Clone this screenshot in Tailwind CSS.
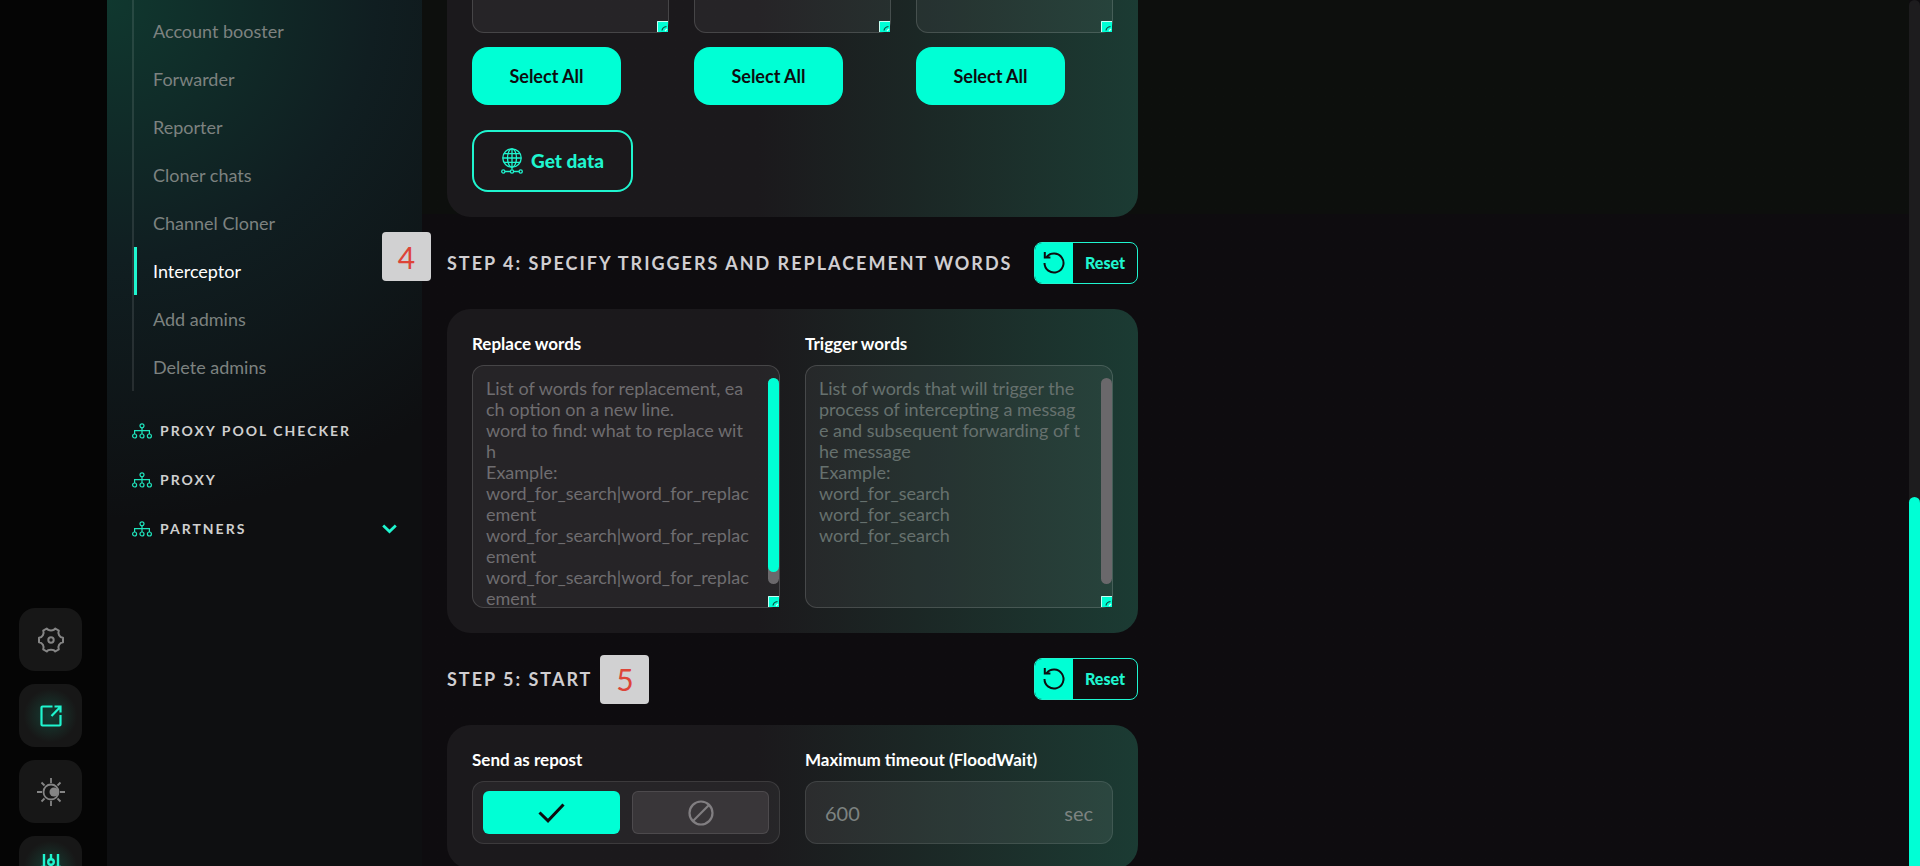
<!DOCTYPE html>
<html lang="en">
<head>
  <meta charset="UTF-8" />
  <meta name="viewport" content="width=device-width, initial-scale=1.0"/>
  <title>Interceptor</title>
  <script src="https://cdn.jsdelivr.net/npm/@tailwindcss/browser@4"></script>
</head>
<body class="bg-[#0e0c0f] text-white font-['Lato','Liberation_Sans',sans-serif]">
  <!-- shared icons -->
  <svg class="hidden">
    <symbol id="tree" viewBox="0 0 20 16">
      <g fill="none" stroke="currentColor" stroke-width="1.2">
        <circle cx="10" cy="2.8" r="2"/>
        <circle cx="2.6" cy="13" r="2"/>
        <circle cx="10" cy="13" r="2"/>
        <circle cx="17.4" cy="13" r="2"/>
        <path d="M10 4.800V11M2.600 11V7.600H17.400V11"/>
      </g>
    </symbol>
    <symbol id="reset" viewBox="0 0 24 24">
      <path fill="none" stroke="currentColor" stroke-width="2" d="M2.500 12A9.500 9.500 0 1 0 4.600 6.100M2.800 1V6.600H8.400"/>
    </symbol>
    <symbol id="grip" viewBox="0 0 11 11">
      <rect width="11" height="11" fill="#00ffd5"/>
      <path d="M.5 11V.5H11" fill="none" stroke="#c9fff4"/>
      <path d="M5 9.500Q5.500 6 9.500 5.500" fill="none" stroke="#11493f" stroke-width="1.200"/>
      <path d="M8 10L10 8" stroke="#c9fff4" stroke-width="1.200"/>
    </symbol>
  </svg>

  <div class="flex h-screen overflow-hidden">
    <!-- icon rail -->
    <aside class="flex w-[107px] shrink-0 flex-col gap-[13px] bg-[#050505] pl-[19px] pt-[608px]">
      <button aria-label="Settings" class="flex size-[63px] shrink-0 items-center justify-center rounded-2xl bg-[#171717] text-[#858585]">
        <svg class="size-[26px]" viewBox="0 0 26 26" fill="none" stroke="currentColor" stroke-width="2" stroke-linejoin="round">
          <path d="M8.800 1.500C10 4 16 4 17.200 1.500L20.800 3.600C19.500 6.500 21.500 10.500 25 10.800V15.200C21.500 15.500 19.500 19.500 20.800 22.400L17.200 24.500C16 22 10 22 8.800 24.500L5.200 22.400C6.500 19.500 4.500 15.500 1 15.200V10.800C4.500 10.500 6.500 6.500 5.200 3.600Z"/>
          <circle cx="13" cy="13" r="2.700"/>
        </svg>
      </button>
      <button aria-label="Open in new window" class="flex size-[63px] shrink-0 items-center justify-center rounded-2xl bg-[#171717] bg-radial from-[#0b3f35] to-[#171717] to-60% text-[#1ff5cf]">
        <svg class="size-[22px]" viewBox="0 0 22 22" fill="none" stroke="currentColor" stroke-width="2.200">
          <path d="M12.500 1.500H2.500Q1.500 1.500 1.500 2.500V19.500Q1.500 20.500 2.500 20.500H19.500Q20.500 20.500 20.500 19.500V10M11.500 11L19.500 2.800M14.500 1.500H20.500V7.500"/>
        </svg>
      </button>
      <button aria-label="Theme" class="flex size-[63px] shrink-0 items-center justify-center rounded-2xl bg-[#171717] text-[#858585]">
        <svg class="size-[28px]" viewBox="0 0 28 28" fill="none" stroke="currentColor" stroke-width="1.800">
          <circle cx="14" cy="14" r="7.500"/>
          <circle cx="17" cy="14" r="4.500" fill="currentColor" stroke="none"/>
          <path d="M14 0V5M14 23V28M0 14H5M23 14H28M4.500 4.500L7.500 7.500M20.500 20.500L23.500 23.500M4.500 23.500L7.500 20.500M20.500 7.500L23.500 4.500"/>
        </svg>
      </button>
      <button aria-label="Controls" class="flex size-[63px] shrink-0 items-center justify-center rounded-2xl bg-[#171717] bg-radial from-[#0b3f35] to-[#171717] to-60% text-[#1ff5cf]">
        <svg class="size-[30px]" viewBox="0 0 30 30" fill="none" stroke="currentColor" stroke-width="2.400">
          <path d="M8 1V14M22 1V14M15 1V6M15 12V29M8 20V29M22 20V29M5 14H11M19 14H25"/>
          <circle cx="15" cy="9" r="2.800"/>
        </svg>
      </button>
    </aside>

    <!-- sidebar -->
    <nav class="w-[315px] shrink-0 bg-[#0e0e10] bg-radial-[ellipse_170%_60%_at_0%_0%] from-[#10382f] via-[#101e21] via-50% to-[#0e0f11] pl-[25px] text-lg text-[#7d8280]">
      <div class="border-l-2 border-white/10 pt-[7px]">
        <a href="#" class="flex h-12 items-center pl-[19px]">Account booster</a>
        <a href="#" class="flex h-12 items-center pl-[19px]">Forwarder</a>
        <a href="#" class="flex h-12 items-center pl-[19px]">Reporter</a>
        <a href="#" class="flex h-12 items-center pl-[19px]">Cloner chats</a>
        <a href="#" class="flex h-12 items-center pl-[19px]">Channel Cloner</a>
        <a href="#" class="flex h-12 items-center border-l-3 border-[#1ff5cf] pl-4 text-white">Interceptor</a>
        <a href="#" class="flex h-12 items-center pl-[19px]">Add admins</a>
        <a href="#" class="flex h-12 items-center pl-[19px]">Delete admins</a>
      </div>
      <div class="pt-[15px] text-sm font-bold tracking-[2px] text-[#cfcfcf]">
        <a href="#" class="flex h-[49px] items-center gap-2"><svg class="h-4 w-5 text-[#1fe5bd]"><use href="#tree"/></svg>PROXY POOL CHECKER</a>
        <a href="#" class="flex h-[49px] items-center gap-2"><svg class="h-4 w-5 text-[#1fe5bd]"><use href="#tree"/></svg>PROXY</a>
        <a href="#" class="flex h-[49px] items-center gap-2 pr-[25px]"><svg class="h-4 w-5 text-[#1fe5bd]"><use href="#tree"/></svg>PARTNERS
          <svg class="ml-auto h-[10px] w-[15px]" viewBox="0 0 15 10" fill="none" stroke="#1ff5cf" stroke-width="2.800"><path d="M1.200 1.500L7.500 7.500L13.800 1.500"/></svg>
        </a>
      </div>
    </nav>

    <!-- content -->
    <main class="min-w-0 grow bg-linear-to-b from-[#0d0f0d] from-[214px] to-[#0e0c0f] to-[214px] pl-[25px]">
      <div class="flex w-[691px] flex-col gap-[25px]">
        <section class="rounded-b-3xl bg-linear-to-r from-[#1b191c] from-45% via-[#1b2725] via-68% to-[#1b3b33] px-[25px] pb-[25px]">
          <div class="grid grid-cols-3 gap-[25px]">
            <div>
              <div class="relative">
                <textarea aria-label="Accounts" class="block h-[33px] w-full resize-none rounded-b-xl border border-t-0 border-white/15 bg-white/5"></textarea>
                <svg class="absolute right-px bottom-px size-[11px]"><use href="#grip"/></svg>
              </div>
              <button class="mt-[14px] h-[58px] w-[149px] rounded-2xl bg-[#00ffd5] text-lg font-bold text-[#0e0c0f]">Select All</button>
            </div>
            <div>
              <div class="relative">
                <textarea aria-label="Sources" class="block h-[33px] w-full resize-none rounded-b-xl border border-t-0 border-white/15 bg-white/5"></textarea>
                <svg class="absolute right-px bottom-px size-[11px]"><use href="#grip"/></svg>
              </div>
              <button class="mt-[14px] h-[58px] w-[149px] rounded-2xl bg-[#00ffd5] text-lg font-bold text-[#0e0c0f]">Select All</button>
            </div>
            <div>
              <div class="relative">
                <textarea aria-label="Targets" class="block h-[33px] w-full resize-none rounded-b-xl border border-t-0 border-white/15 bg-white/5"></textarea>
                <svg class="absolute right-px bottom-px size-[11px]"><use href="#grip"/></svg>
              </div>
              <button class="mt-[14px] h-[58px] w-[149px] rounded-2xl bg-[#00ffd5] text-lg font-bold text-[#0e0c0f]">Select All</button>
            </div>
          </div>
          <button class="mt-[25px] flex h-[62px] w-[161px] items-center justify-center gap-2 rounded-2xl border-2 border-[#1ff5cf] text-[19px] font-black text-[#1ff5cf]">
            <svg class="h-[26px] w-[22px]" viewBox="0 0 22 26" fill="none" stroke="currentColor" stroke-width="1.300">
              <circle cx="11" cy="10" r="9.200"/>
              <ellipse cx="11" cy="10" rx="4.500" ry="9.200"/>
              <path d="M11 .8V21.500M1.800 10H20.200M3 5.700H19M3 14.300H19M4 23.500H9M13 23.500H18"/>
              <circle cx="2.300" cy="23.500" r="1.600"/>
              <circle cx="11" cy="23.500" r="1.600"/>
              <circle cx="19.700" cy="23.500" r="1.600"/>
            </svg>
            Get data
          </button>
        </section>

        <div class="relative flex h-[42px] items-center justify-between">
          <span class="absolute -left-[65px] -top-[10px] flex size-[49px] items-center justify-center rounded-sm bg-[#d1d1d2] text-3xl text-[#dd4438]">4</span>
          <h2 class="whitespace-nowrap text-lg font-bold tracking-[2px] text-[#d0ced1]">STEP 4: SPECIFY TRIGGERS AND REPLACEMENT WORDS</h2>
          <button class="flex h-full w-[104px] shrink-0 overflow-hidden rounded-lg border border-[#1ff5cf] text-base font-black text-[#1ff5cf]">
            <span class="flex h-full w-[38px] items-center justify-center bg-[#00ffd5] text-[#0e0c0f]"><svg class="size-6"><use href="#reset"/></svg></span>
            <span class="flex h-full grow items-center justify-center">Reset</span>
          </button>
        </div>

        <section class="grid grid-cols-2 gap-[25px] rounded-3xl bg-linear-to-r from-[#1b191c] from-45% via-[#1b2725] via-68% to-[#1b3b33] p-[25px]">
          <div>
            <label for="replace" class="mb-[11px] block text-[17px] leading-5 font-bold">Replace words</label>
            <div class="relative">
              <textarea id="replace" class="block h-[243px] w-full resize-none overflow-hidden rounded-xl border border-white/15 bg-white/5 px-[13px] py-3 text-lg leading-[21px] whitespace-pre placeholder:text-[#6f6d70]" placeholder="List of words for replacement, ea&#10;ch option on a new line.&#10;word to find: what to replace wit&#10;h&#10;Example:&#10;word_for_search|word_for_replac&#10;ement&#10;word_for_search|word_for_replac&#10;ement&#10;word_for_search|word_for_replac&#10;ement"></textarea>
              <div class="absolute top-[13px] right-px h-[206px] w-[11px] rounded-full bg-[#6a686b]">
                <div class="h-[194px] rounded-full bg-[#00ffd5]"></div>
              </div>
              <svg class="absolute right-px bottom-px size-[11px]"><use href="#grip"/></svg>
            </div>
          </div>
          <div>
            <label for="trigger" class="mb-[11px] block text-[17px] leading-5 font-bold">Trigger words</label>
            <div class="relative">
              <textarea id="trigger" class="block h-[243px] w-full resize-none overflow-hidden rounded-xl border border-white/15 bg-white/5 px-[13px] py-3 text-lg leading-[21px] whitespace-pre placeholder:text-[#66716e]" placeholder="List of words that will trigger the&#10;process of intercepting a messag&#10;e and subsequent forwarding of t&#10;he message&#10;Example:&#10;word_for_search&#10;word_for_search&#10;word_for_search"></textarea>
              <div class="absolute top-[13px] right-px h-[206px] w-[11px] rounded-full bg-[#6a686b]"></div>
              <svg class="absolute right-px bottom-px size-[11px]"><use href="#grip"/></svg>
            </div>
          </div>
        </section>

        <div class="flex h-[42px] items-center gap-2">
          <h2 class="whitespace-nowrap text-lg font-bold tracking-[2px] text-[#d0ced1]">STEP 5: START</h2>
          <span class="flex size-[49px] items-center justify-center rounded-sm bg-[#d1d1d2] text-3xl text-[#dd4438]">5</span>
          <button class="ml-auto flex h-full w-[104px] shrink-0 overflow-hidden rounded-lg border border-[#1ff5cf] text-base font-black text-[#1ff5cf]">
            <span class="flex h-full w-[38px] items-center justify-center bg-[#00ffd5] text-[#0e0c0f]"><svg class="size-6"><use href="#reset"/></svg></span>
            <span class="flex h-full grow items-center justify-center">Reset</span>
          </button>
        </div>

        <section class="grid grid-cols-2 gap-[25px] rounded-3xl bg-linear-to-r from-[#1b191c] from-45% via-[#1b2725] via-68% to-[#1b3b33] p-[25px]">
          <div role="radiogroup" aria-labelledby="repost-label">
            <p id="repost-label" class="mb-[11px] text-[17px] leading-5 font-bold">Send as repost</p>
            <div class="grid h-[63px] grid-cols-2 gap-3 rounded-xl border border-white/10 bg-white/5 px-[10px] py-[9px]">
              <label class="relative flex items-center justify-center rounded-md bg-[#00ffd5]">
                <input type="radio" name="repost" aria-label="Yes" class="absolute inset-0 appearance-none" checked>
                <svg class="h-5 w-[27px]" viewBox="0 0 27 20" fill="none" stroke="#0e0c0f" stroke-width="3"><path d="M1.500 9.500L10 17.800L25.500 1.500"/></svg>
              </label>
              <label class="relative flex items-center justify-center rounded-md border border-white/10 bg-[#393639]">
                <input type="radio" name="repost" aria-label="No" class="absolute inset-0 appearance-none">
                <svg class="size-[26px]" viewBox="0 0 26 26" fill="none" stroke="#817e81" stroke-width="2.200"><circle cx="13" cy="13" r="11.500"/><path d="M5 21L21 5"/></svg>
              </label>
            </div>
          </div>
          <div>
            <label for="timeout" class="mb-[11px] block text-[17px] leading-5 font-bold">Maximum timeout (FloodWait)</label>
            <div class="flex h-[63px] items-center rounded-xl border border-white/10 bg-white/7 px-[19px] text-xl text-[#7d8381]">
              <input id="timeout" type="text" placeholder="600" class="min-w-0 grow outline-none placeholder:text-[#7d8381]">
              <span>sec</span>
            </div>
          </div>
        </section>
      </div>
    </main>

    <!-- page scrollbar -->
    <div class="flex w-[11px] shrink-0 flex-col justify-end rounded-t-full bg-[#1d1c1e]">
      <div class="h-[369px] rounded-t-full bg-[#00ffd5]"></div>
    </div>
  </div>
</body>
</html>
